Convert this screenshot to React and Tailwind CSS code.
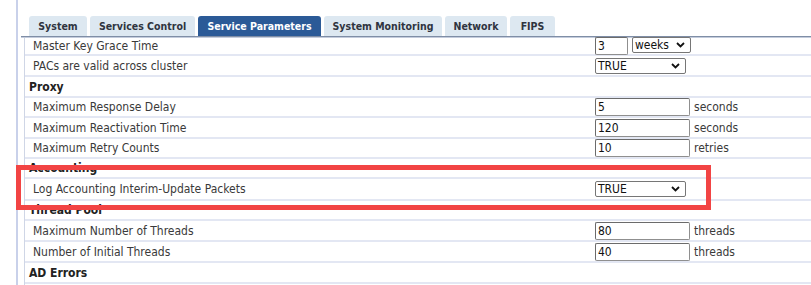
import React from "react";

const font = { fontFamily: '"DejaVu Sans Condensed", "DejaVu Sans", sans-serif' };

const tabs = [
  { t: "System", w: "w-[58px]" },
  { t: "Services Control", w: "w-[105px]" },
  { t: "Service Parameters", w: "w-[123px]" },
  { t: "System Monitoring", w: "w-[118px]" },
  { t: "Network", w: "w-[62px]" },
  { t: "FIPS", w: "w-[45px]" },
];

function TextInput({ value, w = "w-[95px]" }) {
  return (
    <div className={`${w} h-[18px] border border-[#8f8f8f] border-t-[#6b6b6b] border-l-[#6b6b6b] rounded-[2px] bg-white flex items-center pl-[2px] text-[12px] text-[#111] leading-none`}>
      {value}
    </div>
  );
}

function Select({ value, w = "w-[91px]" }) {
  return (
    <div className={`${w} h-[16px] border border-[#767676] rounded-[2px] bg-white flex items-center justify-between pl-[2px] pr-[5px] text-[12px] text-[#111] leading-none`}>
      <span>{value}</span>
      <svg width="9" height="6" viewBox="0 0 9 6"><path d="M1 1 L4.5 4.5 L8 1" fill="none" stroke="#111" strokeWidth="1.8" /></svg>
    </div>
  );
}

const rows = [
  { label: "Master Key Grace Time", h: 18, ctrl: (<div className="flex gap-[4px]"><TextInput value="3" w="w-[33px]" /><Select value="weeks" w="w-[59px]" /></div>) },
  { label: "PACs are valid across cluster", h: 21, ctrl: <Select value="TRUE" /> },
  { header: "Proxy", h: 21 },
  { label: "Maximum Response Delay", h: 20, ctrl: <TextInput value="5" />, unit: "seconds" },
  { label: "Maximum Reactivation Time", h: 21, ctrl: <TextInput value="120" />, unit: "seconds" },
  { label: "Maximum Retry Counts", h: 20, ctrl: <TextInput value="10" />, unit: "retries" },
  { header: "Accounting", h: 20 },
  { label: "Log Accounting Interim-Update Packets", h: 22, ctrl: <Select value="TRUE" /> },
  { header: "Thread Pool", h: 20 },
  { label: "Maximum Number of Threads", h: 21, ctrl: <TextInput value="80" />, unit: "threads" },
  { label: "Number of Initial Threads", h: 21, ctrl: <TextInput value="40" />, unit: "threads" },
  { header: "AD Errors", h: 21 },
];

export default function App() {
  return (
    <div className="relative w-[811px] h-[285px] bg-white overflow-hidden flex" style={font}>
      <div className="w-[16px] shrink-0" />
      <div className="w-[2px] shrink-0 bg-[#c9d1ea]" />
      <div className="flex-1 flex flex-col">
        <div className="h-[16px]" />
        <div className="flex items-end h-[20px] pl-[11px] gap-[3px]">
          {tabs.map(({ t, w }) => {
            const active = t === "Service Parameters";
            return (
              <div
                key={t}
                className={`${w} h-[20px] rounded-t-[3px] flex items-center justify-center text-[10.5px] font-bold leading-none whitespace-nowrap ${active ? "bg-[#2b5a97] text-white" : "bg-[#dde8f1] text-[#2f3440]"}`}
              >
                {t}
              </div>
            );
          })}
        </div>
        <div className="ml-[3px] h-[1px] bg-[#7f8ea6]" />
        <div className="ml-[3px] h-[1px] bg-[#c4ccdc]" />
        <div className="flex-1 ml-[6px] border-l border-[#cfd6e6] flex flex-col">
          {rows.map((r, i) => (
            <div
              key={i}
              style={{ height: r.h }}
              className="shrink-0 flex items-center border-b-2 border-[#e3e7f3] text-[12px] leading-none"
            >
              {r.header ? (
                <span className="pl-[4px] font-bold text-[#222]">{r.header}</span>
              ) : (
                <>
                  <span className="pl-[8px] w-[570px] text-[#3a3a3a]">{r.label}</span>
                  <div className="flex items-center gap-[4px]">
                    {r.ctrl}
                    {r.unit && <span className="text-[#3a3a3a]">{r.unit}</span>}
                  </div>
                </>
              )}
            </div>
          ))}
        </div>
      </div>
      <div className="absolute left-[16px] top-[165px] w-[695px] h-[45px] border-[5px] border-[#f24444]" />
    </div>
  );
}
